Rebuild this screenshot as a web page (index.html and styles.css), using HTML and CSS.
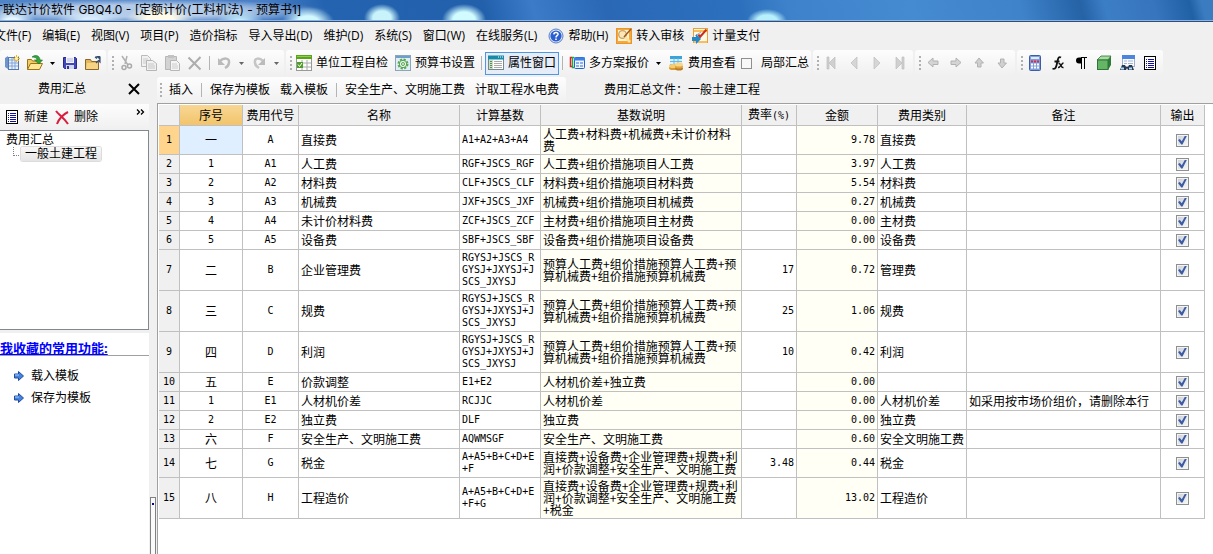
FILE: index.html
```html
<!DOCTYPE html>
<html lang="zh-CN">
<head>
<meta charset="utf-8">
<title>广联达计价软件 GBQ4.0</title>
<link rel="stylesheet" href="styles.css">
</head>
<body>
<div class="app">
<header class="titlebar"><h1 class="title">广联达计价软件 GBQ4.0 - [定额计价(工料机法) - 预算书1]</h1></header>

<nav class="menu">
<button>文件(F)</button><button>编辑(E)</button><button>视图(V)</button><button>项目(P)</button><button>造价指标</button><button>导入导出(D)</button><button>维护(D)</button><button>系统(S)</button><button>窗口(W)</button><button>在线服务(L)</button>
<button class="with-icon"><svg width="16" height="16" viewBox="0 0 16 16"><circle cx="8" cy="8" r="7" fill="#dfe9fb" stroke="#5b7fc0"/><circle cx="8" cy="8" r="5.6" fill="#2a5fd0"/><path d="M5.8 6.4C6 3.6 10.4 4 10 6.4C9.700 7.700 8 7.600 8 9.400M8 10.600V12" fill="none" stroke="#fff" stroke-width="1.600"/></svg>帮助(H)</button>
<button class="with-icon"><svg width="16" height="16" viewBox="0 0 16 16"><rect x=".5" y=".5" width="15" height="15" fill="#f6a83a" stroke="#e89530"/><rect x="2" y="2" width="11" height="11" fill="#fff2d0"/><circle cx="6.500" cy="6.500" r="3.800" fill="#fbe7b6" stroke="#c9a468" stroke-width="1.300"/><path d="M9 9l5 5" stroke="#fbe3a0" stroke-width="2.500"/><path d="M15 1L8 9" stroke="#9b5c26" stroke-width="1.500"/></svg>转入审核</button>
<button class="with-icon"><svg width="16" height="16" viewBox="0 0 16 16"><rect x="1.500" y=".5" width="14" height="14" fill="#fff8e6" stroke="#eda02e"/><path d="M2 3h13M2 14h13" stroke="#f8be5c" stroke-width="2"/><path d="M3 8L9 4M4 10L10 6" stroke="#9aa8ba"/><path d="M14.500 1.500L8 9L6.500 6.500" fill="none" stroke="#c72f22" stroke-width="2"/><path d="M0 9h4V6l5 5l-5 5v-3H0z" fill="#2387c9"/></svg>计量支付</button>
</nav>

<div class="toolbars">
<div class="group first">
<button class="tool" aria-label="新建"><svg width="16" height="16" viewBox="0 0 16 16"><path d="M1 3l3-2v13l-3-2z" fill="#6e94cb"/><rect x="4.500" y="2.500" width="10" height="12" fill="#eaf2ff" stroke="#5478b0"/><path d="M5 5h9M5 8h9M5 11h9M8 3v11M11 3v11" stroke="#82a3d6"/><path d="M12.500 0v7M9 3.500h7M10 1l5 5M15 1l-5 5" stroke="#f3b81e"/><circle cx="12.500" cy="3.500" r="1.500" fill="#fff8b0"/></svg></button>
<button class="tool" aria-label="打开"><svg width="16" height="16" viewBox="0 0 16 16"><path d="M.5 14.500V4.500h4l1 1.500h6v3" fill="#f1cc63" stroke="#9c7416"/><path d="M.5 14.500L3.500 8.500h12l-3 6z" fill="#ffe797" stroke="#9c7416"/><path d="M5 2c4-3 8-1 8 3h2.500L12 9L7.500 5H10C10 3 8 2 5 2z" fill="#35a43b" stroke="#177123" stroke-width=".6"/></svg></button>
<button class="tool" aria-label="打开列表"><svg width="5" height="16" viewBox="0 0 5 16"><path d="M0 7h5L2.500 10z" fill="#000"/></svg></button>
<button class="tool" aria-label="保存"><svg width="16" height="16" viewBox="0 0 16 16"><path d="M1.500 2.500h12l1 1v10h-12l-1-1z" fill="#4148b7" stroke="#282a84"/><rect x="4" y="2" width="8" height="6" fill="#f4f4ff"/><path d="M5 4h6M5 6h6" stroke="#b4b8d8"/><rect x="4" y="10" width="8" height="4" fill="#d3d7ef"/><rect x="5" y="11" width="2" height="3" fill="#30358f"/></svg></button>
<button class="tool" aria-label="关闭工程"><svg width="16" height="16" viewBox="0 0 16 16"><path d="M.5 14.500v-10h5l1 2h7v8z" fill="#e3b85c" stroke="#8d6728"/><path d="M1 14L2 8h11v6z" fill="#f6d486"/><path d="M10 2h5v5l-1.500-1.500L11 8M10 2l2 1.500" fill="none" stroke="#344e70" stroke-width="1.200"/><path d="M11 1h4v4z" fill="#344e70"/></svg></button>
</div>

<div class="group"><span class="grip"></span>
<button class="tool" disabled aria-label="剪切"><svg width="16" height="16" viewBox="0 0 16 16"><path d="M4 1l6 9M9 1L7 9" stroke="#b0b0b0" stroke-width="1.500"/><circle cx="6" cy="12.500" r="2" fill="none" stroke="#aaa" stroke-width="1.500"/><circle cx="11.500" cy="11" r="2" fill="none" stroke="#aaa" stroke-width="1.500"/></svg></button>
<button class="tool" disabled aria-label="复制"><svg width="16" height="16" viewBox="0 0 16 16"><path d="M.5.5h6l3 3v8h-9z" fill="#f1f1f1" stroke="#bbb"/><path d="M2 4h5M2 6h5M2 8h3" stroke="#ccc"/><path d="M5.500 5.500h6l4 3v7h-10z" fill="#f1f1f1" stroke="#b5b5b5"/><path d="M7 9h6M7 11h7M7 13h7" stroke="#c5c5c5"/></svg></button>
<button class="tool" disabled aria-label="粘贴"><svg width="16" height="16" viewBox="0 0 16 16"><path d="M1.500 1.500h11v13h-11z" fill="#d3d3d3" stroke="#b7b7b7"/><rect x="4" y="0" width="6" height="3" fill="#c2c2c2"/><path d="M6.500 5.500h6l3 3v7h-9z" fill="#f5f5f5" stroke="#b7b7b7"/><path d="M8 9h5M8 11h6M8 13h6" stroke="#ccc"/></svg></button>
<button class="tool" disabled aria-label="删除"><svg width="16" height="16" viewBox="0 0 16 16"><path d="M1.500 2.500L13.500 14.500M13.500 2L2 14" stroke="#adadad" stroke-width="2"/></svg></button>
<span class="sep"></span>
<button class="tool" disabled aria-label="撤销"><svg width="16" height="16" viewBox="0 0 16 16"><path d="M4 6C7 3 14 2 13 8c-.5 3-2 4-4 5" fill="none" stroke="#bbb" stroke-width="2.500"/><path d="M2 3v7h7z" fill="#bbb"/></svg></button>
<button class="tool" disabled aria-label="撤销列表"><svg width="5" height="16" viewBox="0 0 5 16"><path d="M0 7h5L2.500 10z" fill="#666"/></svg></button>
<button class="tool" disabled aria-label="恢复"><svg width="16" height="16" viewBox="0 0 16 16"><path d="M12 6C9 3 3 2 4 8c.5 3 2 4 4 5" fill="none" stroke="#c5c5c5" stroke-width="2.500"/><path d="M14 3v7H7z" fill="#bbb"/></svg></button>
<button class="tool" disabled aria-label="恢复列表"><svg width="5" height="16" viewBox="0 0 5 16"><path d="M0 7h5L2.500 10z" fill="#666"/></svg></button>
</div>

<div class="group"><span class="grip"></span>
<button class="tool"><svg width="16" height="16" viewBox="0 0 16 16"><rect x=".5" y=".5" width="15" height="15" fill="#fff" stroke="#999"/><rect width="16" height="4" fill="#58a618"/><path d="M1 1.500h14" stroke="#8fce4d"/><path d="M1 8h14M1 12h14M6 5v10M11 5v10" stroke="#aaa"/><rect x="1" y="7" width="6" height="6" fill="#4f9e25"/><path d="M2 9.500l1.500 2L6 8" fill="none" stroke="#fff"/></svg>单位工程自检</button>
<button class="tool"><svg width="16" height="16" viewBox="0 0 16 16"><rect x=".5" y=".5" width="15" height="15" fill="#e2eef5" stroke="#8aa6b8"/><path d="M1 2h14" stroke="#6e9fcb" stroke-width="2"/><circle cx="8" cy="9" r="4.500" fill="#e9f5e6" stroke="#59a656" stroke-width="2" stroke-dasharray="2.200 1.330"/><circle cx="8" cy="9" r="3.700" fill="none" stroke="#59a656"/><circle cx="8" cy="9" r="1.500" fill="none" stroke="#59a656"/></svg>预算书设置</button>
<span class="sep"></span>
<button class="tool active"><svg width="16" height="16" viewBox="0 0 16 16"><rect x=".5" y="1.500" width="15" height="13" fill="#fff" stroke="#788"/><path d="M0 2.500h16" stroke="#168ca9" stroke-width="4"/><path d="M10 2h1M12 2h1M14 2h1" stroke="#fff"/><path d="M1 5h4v9H1z" fill="#c8dfc4"/><path d="M2 6.500h2M2 8.500h2M2 10.500h2M2 12.500h2" stroke="#5e8a5c"/><path d="M6 6.500h8M6 8.500h8M6 10.500h8M6 12.500h8" stroke="#aaa"/></svg>属性窗口</button>
<span class="sep"></span>
<button class="tool"><svg width="16" height="16" viewBox="0 0 16 16"><path d="M3 2.500H1.500v9H3" fill="none" stroke="#e02020" stroke-width="1.500"/><path d="M5 2.500H3.500v10H5" fill="none" stroke="#22a64b" stroke-width="1.500"/><rect x="5.500" y="2.500" width="10" height="11" rx="1" fill="#edf5ff" stroke="#2264c6"/><path d="M5 4h11" stroke="#3d7fe4" stroke-width="3"/><path d="M7 8h3M11 8h3M7 11h3M11 11h3" stroke="#6c9ce0" stroke-width="1.500"/></svg>多方案报价</button>
<button class="tool" aria-label="报价列表"><svg width="5" height="16" viewBox="0 0 5 16"><path d="M0 7h5L2.500 10z" fill="#000"/></svg></button>
<button class="tool"><svg width="16" height="16" viewBox="0 0 16 16"><rect x="2" y="1" width="12" height="11" fill="#d9effb"/><path d="M2 2.500h12" stroke="#3aa3d8" stroke-width="3"/><path d="M2 6.500h12M2 9.500h12M6 3v9M10 3v9" stroke="#65b9e3"/><ellipse cx="5" cy="13" rx="4" ry="2" fill="#d99a32"/><ellipse cx="5" cy="11" rx="4" ry="2" fill="#f6cc70"/><ellipse cx="11" cy="13.500" rx="4" ry="2" fill="#bc7c24"/><ellipse cx="11" cy="11.500" rx="4" ry="2" fill="#e0a33b"/><ellipse cx="11" cy="9.500" rx="4" ry="2" fill="#f8d788"/></svg>费用查看</button>
<label class="summary"><input type="checkbox" class="plain-check">局部汇总</label>
</div>

<div class="group"><span class="grip"></span>
<button class="tool" disabled aria-label="第一条"><svg width="16" height="16" viewBox="0 0 16 16"><path d="M4 2h2v12H4zM12 2v12L6 8z" fill="#d0d0d0" stroke="#bdbdbd" stroke-width=".7"/></svg></button>
<button class="tool" disabled aria-label="上一条"><svg width="16" height="16" viewBox="0 0 16 16"><path d="M11 2v12L5 8z" fill="#d6d6d6" stroke="#bdbdbd" stroke-width=".7"/></svg></button>
<button class="tool" disabled aria-label="下一条"><svg width="16" height="16" viewBox="0 0 16 16"><path d="M5 2v12l6-6z" fill="#d6d6d6" stroke="#bdbdbd" stroke-width=".7"/></svg></button>
<button class="tool" disabled aria-label="最后一条"><svg width="16" height="16" viewBox="0 0 16 16"><path d="M10 2h2v12h-2zM4 2v12l6-6z" fill="#d0d0d0" stroke="#bdbdbd" stroke-width=".7"/></svg></button>
</div>

<div class="group"><span class="grip"></span>
<button class="tool" disabled aria-label="左移"><svg width="16" height="16" viewBox="0 0 16 16"><path d="M3 7.500L8 3v3h5v3.500H8V12z" fill="#d4d4d4" stroke="#b2b2b2"/></svg></button>
<button class="tool" disabled aria-label="右移"><svg width="16" height="16" viewBox="0 0 16 16"><path d="M13 7.500L8 3v3H3v3.500h5V12z" fill="#d4d4d4" stroke="#b2b2b2"/></svg></button>
<button class="tool" disabled aria-label="上移"><svg width="16" height="16" viewBox="0 0 16 16"><path d="M8 3l4.500 5H10v4H6.500V8H4z" fill="#d0d0d0" stroke="#b2b2b2"/></svg></button>
<button class="tool" disabled aria-label="下移"><svg width="16" height="16" viewBox="0 0 16 16"><path d="M8 13l4.500-5H10V4H6.500v4H4z" fill="#d0d0d0" stroke="#b2b2b2"/></svg></button>
</div>

<div class="group"><span class="grip"></span>
<button class="tool" aria-label="计算器"><svg width="16" height="16" viewBox="0 0 16 16"><rect x="2.500" y=".5" width="11" height="15" rx="1" fill="#7fa0dc" stroke="#3c5da4"/><rect x="4" y="2" width="8" height="2" fill="#dcebff"/><path d="M4 6.500h2M7 6.500h2M10 6.500h2" stroke="#e02a3a" stroke-width="2"/><path d="M4 9.500h2M7 9.500h2M10 9.500h2M4 12.500h2M7 12.500h2M10 12.500h2" stroke="#fff" stroke-width="2"/></svg></button>
<button class="tool" aria-label="函数"><svg width="16" height="16" viewBox="0 0 16 16"><path d="M11 2.500C8.500 1 8 4 7.500 6C6.500 11 6 15 2.500 13.500M4.500 6.500h5" fill="none" stroke="#111" stroke-width="1.800"/><path d="M8.500 8.500c3-1 2 5 5 4M13.500 8c-2 0-3 5-5.500 4.500" fill="none" stroke="#111" stroke-width="1.400"/></svg></button>
<button class="tool" aria-label="段落标记"><svg width="16" height="16" viewBox="0 0 16 16"><path d="M8 2.500H6a3 3 0 0 0 0 6h2zM7 2h7v1H7z" fill="#000"/><path d="M8.500 3v11M11.500 3v11" stroke="#000"/></svg></button>
<button class="tool" aria-label="图形"><svg width="16" height="16" viewBox="0 0 16 16"><path d="M1 5l4-4h10l-3 4z" fill="#a9dda4" stroke="#2f7536" stroke-width=".8"/><path d="M12 5l3-4v9l-3 5z" fill="#2f7b38"/><rect x="1.500" y="5" width="10.500" height="9.500" fill="#65b566" stroke="#2f7536"/></svg></button>
<button class="tool" aria-label="查找"><svg width="16" height="16" viewBox="0 0 16 16"><rect x="3.500" y=".5" width="12" height="11" fill="#f8faff" stroke="#9daed0"/><path d="M3 2h13" stroke="#4c85de" stroke-width="4"/><path d="M5 6h3M9 6h5M5 8.500h3M9 8.500h5" stroke="#a6b5cc"/><path d="M3 10h3l1 2h2l1-2h3l2 5H9l-1-2l-1 2H1z" fill="#26384e"/><path d="M2 13.500h3M10 13.500h3" stroke="#b0dcff" stroke-width="2"/></svg></button>
<button class="tool" aria-label="列表"><svg width="16" height="16" viewBox="0 0 16 16"><rect x="2.500" y="1.500" width="11" height="13" fill="#fff" stroke="#000"/><path d="M4 4.500h1M4 6.500h1M4 8.500h1M4 10.500h1M4 12.500h1M6 4.500h6M6 6.500h6M6 8.500h6M6 10.500h6M6 12.500h6" stroke="#10109a"/></svg></button>
</div>
</div>

<div class="workspace">
<aside class="side">
<div class="side-head"><h2 class="side-title">费用汇总</h2><button class="close" aria-label="关闭"><svg width="14" height="14" viewBox="0 0 14 14"><path d="M2 2l10 10M12 2L2 12" stroke="#000" stroke-width="2"/></svg></button></div>
<div class="side-tools">
<button class="tool"><svg width="16" height="16" viewBox="0 0 16 16"><rect x="2.500" y="1.500" width="11" height="13" fill="#fff" stroke="#000"/><path d="M4 4.500h1M4 6.500h1M4 8.500h1M4 10.500h1M4 12.500h1M6 4.500h6M6 6.500h6M6 8.500h6M6 10.500h6M6 12.500h6" stroke="#10109a"/></svg>新建</button>
<button class="tool"><svg width="16" height="16" viewBox="0 0 16 16"><path d="M2 2c3 4 8 7 12 13M14 3C10 5 5 10 3 15" fill="none" stroke="#d81e3c" stroke-width="2"/></svg>删除</button>
<button class="more" aria-label="更多"><svg width="9" height="6" viewBox="0 0 9 6"><path d="M1 .5L3.500 3L1 5.500M5 .5L7.500 3L5 5.500" fill="none" stroke="#000" stroke-width="1.300"/></svg></button>
</div>
<div class="tree"><div class="tree-root">费用汇总</div><div class="tree-child"><span class="branch"></span><button class="tree-node">一般土建工程</button></div></div>
<section class="favorites">
<div class="fav-head"><a href="#favorites" class="fav-title">我收藏的常用功能:</a></div>
<button class="fav"><svg width="10" height="10" viewBox="0 0 10 10"><path d="M.5 3h4V.5L9.500 5L4.500 9.500V7h-4z" fill="#4384e0" stroke="#244a9c"/><path d="M1 4h4" stroke="#a5cfff"/></svg>载入模板</button>
<button class="fav"><svg width="10" height="10" viewBox="0 0 10 10"><path d="M.5 3h4V.5L9.500 5L4.500 9.500V7h-4z" fill="#4384e0" stroke="#244a9c"/><path d="M1 4h4" stroke="#a5cfff"/></svg>保存为模板</button>
</section>
</aside>
<div class="splitter"><span class="thumb"></span></div>
<main class="main">
<div class="main-tools">
<div class="group actions"><span class="grip"></span><button class="tool">插入</button><span class="sep"></span><button class="tool">保存为模板</button><button class="tool">载入模板</button><span class="sep"></span><button class="tool">安全生产、文明施工费</button><button class="tool">计取工程水电费</button></div>
<span class="file">费用汇总文件：一般土建工程</span>
</div>
<div class="sheet">
<table class="grid">
<colgroup><col class="c-no"><col class="c-seq"><col class="c-code"><col class="c-name"><col class="c-base"><col class="c-desc"><col class="c-rate"><col class="c-sum"><col class="c-kind"><col class="c-note"><col class="c-out"></colgroup>
<thead><tr><th></th><th class="current">序号</th><th>费用代号</th><th>名称</th><th>计算基数</th><th>基数说明</th><th>费率<span class="mono">(%)</span></th><th>金额</th><th>费用类别</th><th>备注</th><th>输出</th></tr></thead>
<tbody>
<tr><th class="current">1</th><td class="seq picked">一</td><td class="code">A</td><td>直接费</td><td class="base">A1+A2+A3+A4</td><td class="desc">人工费+材料费+机械费+未计价材料费</td><td class="num"></td><td class="num sum">9.78</td><td>直接费</td><td></td><td class="out"><input type="checkbox" checked aria-label="输出 1"></td></tr>
<tr><th>2</th><td class="seq mono">1</td><td class="code">A1</td><td>人工费</td><td class="base">RGF+JSCS_RGF</td><td class="desc">人工费+组价措施项目人工费</td><td class="num"></td><td class="num sum">3.97</td><td>人工费</td><td></td><td class="out"><input type="checkbox" checked aria-label="输出 2"></td></tr>
<tr><th>3</th><td class="seq mono">2</td><td class="code">A2</td><td>材料费</td><td class="base">CLF+JSCS_CLF</td><td class="desc">材料费+组价措施项目材料费</td><td class="num"></td><td class="num sum">5.54</td><td>材料费</td><td></td><td class="out"><input type="checkbox" checked aria-label="输出 3"></td></tr>
<tr><th>4</th><td class="seq mono">3</td><td class="code">A3</td><td>机械费</td><td class="base">JXF+JSCS_JXF</td><td class="desc">机械费+组价措施项目机械费</td><td class="num"></td><td class="num sum">0.27</td><td>机械费</td><td></td><td class="out"><input type="checkbox" checked aria-label="输出 4"></td></tr>
<tr><th>5</th><td class="seq mono">4</td><td class="code">A4</td><td>未计价材料费</td><td class="base">ZCF+JSCS_ZCF</td><td class="desc">主材费+组价措施项目主材费</td><td class="num"></td><td class="num sum">0.00</td><td>主材费</td><td></td><td class="out"><input type="checkbox" checked aria-label="输出 5"></td></tr>
<tr><th>6</th><td class="seq mono">5</td><td class="code">A5</td><td>设备费</td><td class="base">SBF+JSCS_SBF</td><td class="desc">设备费+组价措施项目设备费</td><td class="num"></td><td class="num sum">0.00</td><td>设备费</td><td></td><td class="out"><input type="checkbox" checked aria-label="输出 6"></td></tr>
<tr><th>7</th><td class="seq">二</td><td class="code">B</td><td>企业管理费</td><td class="base">RGYSJ+JSCS_RGYSJ+JXYSJ+JSCS_JXYSJ</td><td class="desc">预算人工费+组价措施预算人工费+预算机械费+组价措施预算机械费</td><td class="num">17</td><td class="num sum">0.72</td><td>管理费</td><td></td><td class="out"><input type="checkbox" checked aria-label="输出 7"></td></tr>
<tr><th>8</th><td class="seq">三</td><td class="code">C</td><td>规费</td><td class="base">RGYSJ+JSCS_RGYSJ+JXYSJ+JSCS_JXYSJ</td><td class="desc">预算人工费+组价措施预算人工费+预算机械费+组价措施预算机械费</td><td class="num">25</td><td class="num sum">1.06</td><td>规费</td><td></td><td class="out"><input type="checkbox" checked aria-label="输出 8"></td></tr>
<tr><th>9</th><td class="seq">四</td><td class="code">D</td><td>利润</td><td class="base">RGYSJ+JSCS_RGYSJ+JXYSJ+JSCS_JXYSJ</td><td class="desc">预算人工费+组价措施预算人工费+预算机械费+组价措施预算机械费</td><td class="num">10</td><td class="num sum">0.42</td><td>利润</td><td></td><td class="out"><input type="checkbox" checked aria-label="输出 9"></td></tr>
<tr><th>10</th><td class="seq">五</td><td class="code">E</td><td>价款调整</td><td class="base">E1+E2</td><td class="desc">人材机价差+独立费</td><td class="num"></td><td class="num sum">0.00</td><td></td><td></td><td class="out"><input type="checkbox" checked aria-label="输出 10"></td></tr>
<tr><th>11</th><td class="seq mono">1</td><td class="code">E1</td><td>人材机价差</td><td class="base">RCJJC</td><td class="desc">人材机价差</td><td class="num"></td><td class="num sum">0.00</td><td>人材机价差</td><td>如采用按市场价组价，请删除本行</td><td class="out"><input type="checkbox" checked aria-label="输出 11"></td></tr>
<tr><th>12</th><td class="seq mono">2</td><td class="code">E2</td><td>独立费</td><td class="base">DLF</td><td class="desc">独立费</td><td class="num"></td><td class="num sum">0.00</td><td>独立费</td><td></td><td class="out"><input type="checkbox" checked aria-label="输出 12"></td></tr>
<tr><th>13</th><td class="seq">六</td><td class="code">F</td><td>安全生产、文明施工费</td><td class="base">AQWMSGF</td><td class="desc">安全生产、文明施工费</td><td class="num"></td><td class="num sum">0.60</td><td>安全文明施工费</td><td></td><td class="out"><input type="checkbox" checked aria-label="输出 13"></td></tr>
<tr><th>14</th><td class="seq">七</td><td class="code">G</td><td>税金</td><td class="base">A+A5+B+C+D+E+F</td><td class="desc">直接费+设备费+企业管理费+规费+利润+价款调整+安全生产、文明施工费</td><td class="num">3.48</td><td class="num sum">0.44</td><td>税金</td><td></td><td class="out"><input type="checkbox" checked aria-label="输出 14"></td></tr>
<tr><th>15</th><td class="seq">八</td><td class="code">H</td><td>工程造价</td><td class="base">A+A5+B+C+D+E+F+G</td><td class="desc">直接费+设备费+企业管理费+规费+利润+价款调整+安全生产、文明施工费+税金</td><td class="num"></td><td class="num sum">13.02</td><td>工程造价</td><td></td><td class="out"><input type="checkbox" checked aria-label="输出 15"></td></tr>
</tbody>
</table>
</div>
</main>
</div>
</div>
</body>
</html>
```
FILE: styles.css
```css
* { box-sizing: border-box; }

body {
  margin: 0;
  background: #f0f0f0;
  color: #000;
  font: 12px/16px "Open Sans", "Noto Sans CJK SC", sans-serif;
}

button {
  margin: 0;
  padding: 0;
  border: 0;
  background: none;
  color: inherit;
  font: inherit;
  white-space: nowrap;
}

svg { display: block; flex: none; }

.app {
  display: flex;
  flex-direction: column;
  min-height: 100vh;
  overflow: hidden;
}

.titlebar {
  height: 22px;
  padding-top: 2px;
  overflow: hidden;
  border-bottom: 1px solid #2c4f7e;
  box-shadow: inset 0 -1px #8fb4de;
  background:
    radial-gradient(ellipse 24px 14px at 12px 22px, #e4f6ff 30%, transparent),
    radial-gradient(ellipse 34px 12px at 90px 20px, #d9ecfb 20%, transparent),
    radial-gradient(ellipse 34px 15px at 160px 20px, #fffbe8 40%, transparent),
    radial-gradient(ellipse 24px 12px at 240px 22px, #c2ebfb 20%, transparent),
    radial-gradient(ellipse 26px 15px at 308px 22px, #d2f8ff 40%, transparent),
    radial-gradient(ellipse 18px 14px at 382px 18px, #c8f3fb 50%, transparent),
    radial-gradient(ellipse 22px 16px at 464px 20px, #d0fbff 50%, transparent),
    radial-gradient(ellipse 20px 12px at 767px 21px, #b7effc 50%, transparent),
    radial-gradient(ellipse 190px 12px at 140px 11px, #e2ecf8b0 50%, transparent),
    linear-gradient(75deg, #4f84c8 0, #4a7fc6 22%, #2463b0 27%, #2260ac 40%, #3b7bc8 44%, #2a68b6 50%, #2c70bd 61%, #3d82ca 65%, #458bd2 75%, #3f83ca 84%, #2562a6 89%, #3c7ec6 91%, #3775be 95%, #2060a4 98%, #3b7bc0 99%);
}

.title {
  margin: 0 0 0 -9px;
  font-family: Inter, "Noto Sans CJK SC", sans-serif;
  font-size: 12px;
  font-weight: 400;
  line-height: 16px;
  white-space: nowrap;
}

.menu {
  display: flex;
  align-items: center;
  gap: 11px;
  height: 28px;
  margin-left: -6px;
}

.with-icon {
  display: flex;
  align-items: center;
  gap: 4px;
}

.with-icon + .with-icon { margin-left: -3px; }

.toolbars {
  display: flex;
  gap: 2px;
  height: 27px;
}

.group {
  display: flex;
  align-items: center;
  gap: 1px;
  height: 26px;
  padding: 0 2px 0 4px;
  border-radius: 3px;
  background: linear-gradient(#fdfdfd, #f0f0f0);
}

.group.first { padding-left: 1px; }

.grip {
  width: 2px;
  height: 14px;
  background: repeating-linear-gradient(#b0b0b0 0 2px, transparent 2px 4px);
}

.sep {
  width: 1px;
  height: 14px;
  margin: 0 2px;
  background: #b4b4b4;
}

.tool {
  display: flex;
  align-items: center;
  gap: 4px;
  height: 23px;
  padding: 0 3px;
}

.tool.active {
  background: #e4edf8;
  box-shadow: inset 0 0 0 1px #4f97e2;
}

.summary {
  display: flex;
  align-items: center;
  gap: 9px;
  padding-left: 1px;
  white-space: nowrap;
}

.plain-check {
  appearance: none;
  width: 11px;
  height: 11px;
  margin: 0;
  border: 1px solid #8e8f8f;
  background: #f8f8f8;
}

.workspace {
  display: flex;
  flex: 1;
}

.side {
  display: flex;
  flex-direction: column;
  width: 149px;
  flex: none;
}

.side-head {
  display: flex;
  align-items: center;
  justify-content: space-between;
  height: 27px;
  padding: 0 8px 3px 38px;
}

.side-title {
  margin: 0;
  font-size: 12px;
  font-weight: 400;
}

.side-tools {
  display: flex;
  align-items: center;
  height: 26px;
  padding-left: 1px;
  background: linear-gradient(#fdfdfd, #f0f0f0);
}

.more {
  align-self: flex-start;
  margin: 5px 4px 0 auto;
}

.tree {
  height: 200px;
  padding: 2px 0 0 6px;
  border: 1px solid #828790;
  border-left: 0;
  background: #fff;
  line-height: 14px;
}

.tree-child { display: flex; }

.branch {
  width: 8px;
  height: 9px;
  margin-left: 7px;
  border-left: 1px dotted #808080;
  border-bottom: 1px dotted #808080;
}

.tree-node {
  padding: 0 4px;
  border-radius: 2px;
  background: linear-gradient(#f8f8f8, #e5e5e5);
  box-shadow: 0 0 0 1px #dcdcdc;
  line-height: 14px;
}

.favorites {
  flex: 1;
  margin-top: 3px;
  padding-top: 8px;
  background: #fff;
}

.fav-head {
  height: 15px;
  margin-bottom: 9px;
  border-bottom: 1px solid #a0a0a0;
}

.fav-title {
  display: block;
  color: #00f;
  font-size: 13px;
  font-weight: 700;
  line-height: 15px;
  white-space: nowrap;
}

.fav {
  display: flex;
  align-items: center;
  gap: 7px;
  height: 22px;
  padding-left: 14px;
}

.splitter {
  display: flex;
  justify-content: center;
  align-items: flex-end;
  width: 8px;
  flex: none;
}

.thumb {
  width: 6px;
  height: 57px;
  border: 1px solid #808080;
  border-bottom: 0;
  background: radial-gradient(circle at 2px 6px, #0000a0 1px, transparent 1px), #fafafa;
}

.main {
  display: flex;
  flex-direction: column;
  flex: 1;
  min-width: 0;
}

.main-tools {
  display: flex;
  align-items: center;
  height: 26px;
  white-space: nowrap;
}

.actions {
  gap: 0;
  padding-left: 3px;
}

.actions .tool { padding: 0 5px; }
.actions .grip { margin-right: 2px; }
.actions .sep { margin: 0 3px; }

.file { margin-left: 38px; }

.sheet {
  flex: 1;
  padding: 1px 8px 0 1px;
  border-top: 1px solid #a0a0a0;
  border-left: 1px solid #a0a0a0;
  background: #fff;
}

.grid {
  width: 100%;
  border-collapse: separate;
  border-spacing: 0;
  table-layout: fixed;
  font: 12px/12px "Noto Sans CJK SC", sans-serif;
}

.c-no { width: 21px; }
.c-seq { width: 63px; }
.c-code { width: 56px; }
.c-name { width: 161px; }
.c-base { width: 81px; }
.c-desc { width: 201px; }
.c-rate { width: 55px; }
.c-sum { width: 81px; }
.c-kind { width: 89px; }
.c-out { width: 44px; }

.grid th,
.grid td {
  height: 19px;
  padding: 2px;
  border: 0 solid #c0c0c0;
  border-width: 0 1px 1px 0;
  font-weight: 400;
  vertical-align: middle;
}

.grid th {
  padding: 2px 0;
  background: #f0f0f0;
  white-space: nowrap;
}

.grid thead th { height: 21px; }
.grid thead .current { background: linear-gradient(#f8d795, #f2c46b); }
.grid tbody .current { background: #ffd48c; }
.grid .picked { background: #e0efff; }
.grid .seq,
.grid .code,
.grid .out { text-align: center; }

.grid tbody th,
.grid .mono,
.grid .code,
.grid .base,
.grid .num {
  font-family: "DejaVu Sans Mono", monospace;
  font-size: 10px;
}

.grid .base,
.grid .desc {
  word-break: break-all;
  line-break: anywhere;
}

.grid .desc,
.grid .sum { background: #fffff5; }

.grid .num { text-align: right; }

.out input {
  appearance: none;
  display: block;
  width: 13px;
  height: 13px;
  margin: 0 auto;
  border: 1px solid #8e8f8f;
  background: linear-gradient(135deg, #c9ced6, #fafafa);
  box-shadow: inset 0 0 0 1px #f4f4f4;
}

.out input::after {
  content: "";
  display: block;
  width: 9px;
  height: 9px;
  margin: 1px;
  background: #3c5ca2;
  clip-path: polygon(0 50%, 20% 40%, 42% 64%, 78% 0, 100% 0, 50% 100%, 36% 100%);
}
```
